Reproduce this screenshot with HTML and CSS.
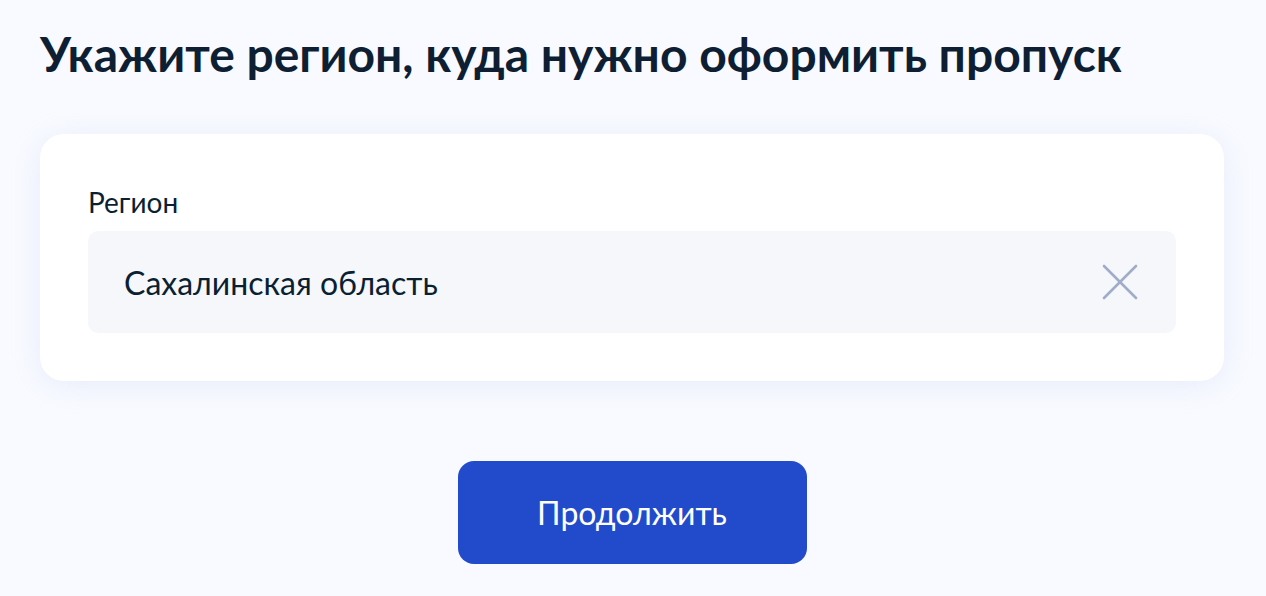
FILE: index.html
```html
<!DOCTYPE html>
<html lang="ru">
<head>
    <meta charset="UTF-8">
    <meta name="viewport" content="width=device-width, initial-scale=1.0">
    <title>Регион пропуска</title>
    <link rel="stylesheet" href="styles.css">
</head>
<body>
    <div class="page">
        <h1 class="title">Укажите регион, куда нужно оформить пропуск</h1>

        <div class="card">
            <label class="field-label" for="regionInput">Регион</label>
            <div class="field">
                <input type="text" id="regionInput" class="field-input" value="Сахалинская область">
                <span class="field-clear">
                    <svg width="36" height="36" viewBox="0 0 36 36" fill="none">
                        <path d="M2 2L34 34M34 2L2 34" stroke="#a1acca" stroke-width="2.6" stroke-linecap="round"/>
                    </svg>
                </span>
            </div>
        </div>

        <div class="actions">
            <button class="btn-primary">Продолжить</button>
        </div>
    </div>
</body>
</html>
```

FILE: styles.css
```css
body {
    font-family: Lato, 'Noto Sans', sans-serif;
    margin: 0;
    padding: 0;
    background-color: #f8faff;
    color: #0b1f33;
}
.page {
    padding: 22px 42px 0 40px;
}
.title {
    font-size: 48px;
    font-weight: 700;
    line-height: 64px;
    margin: 0 0 48px 0;
    color: #0f1f33;
}
.card {
    background-color: #fff;
    border-radius: 24px;
    padding: 48px;
    box-shadow: 0 4px 30px rgba(170, 185, 230, 0.2);
}
.field-label {
    display: block;
    font-size: 28px;
    line-height: 40px;
    margin-bottom: 9px;
    color: #0b1f33;
}
.field {
    display: flex;
    align-items: center;
    height: 102px;
    background-color: #f5f7fa;
    border-radius: 10px;
    padding: 0 38px 0 36px;
}
.field-input {
    flex: 1;
    border: none;
    background: transparent;
    font-family: inherit;
    font-size: 32px;
    color: #0b1f33;
    outline: none;
    padding: 0;
}
.field-clear {
    display: flex;
}
.actions {
    display: flex;
    justify-content: center;
    margin-top: 80px;
}
.btn-primary {
    width: 349px;
    height: 103px;
    background-color: #224bcc;
    color: #fff;
    border: none;
    border-radius: 16px;
    font-family: inherit;
    font-size: 32px;
    cursor: pointer;
}
```
